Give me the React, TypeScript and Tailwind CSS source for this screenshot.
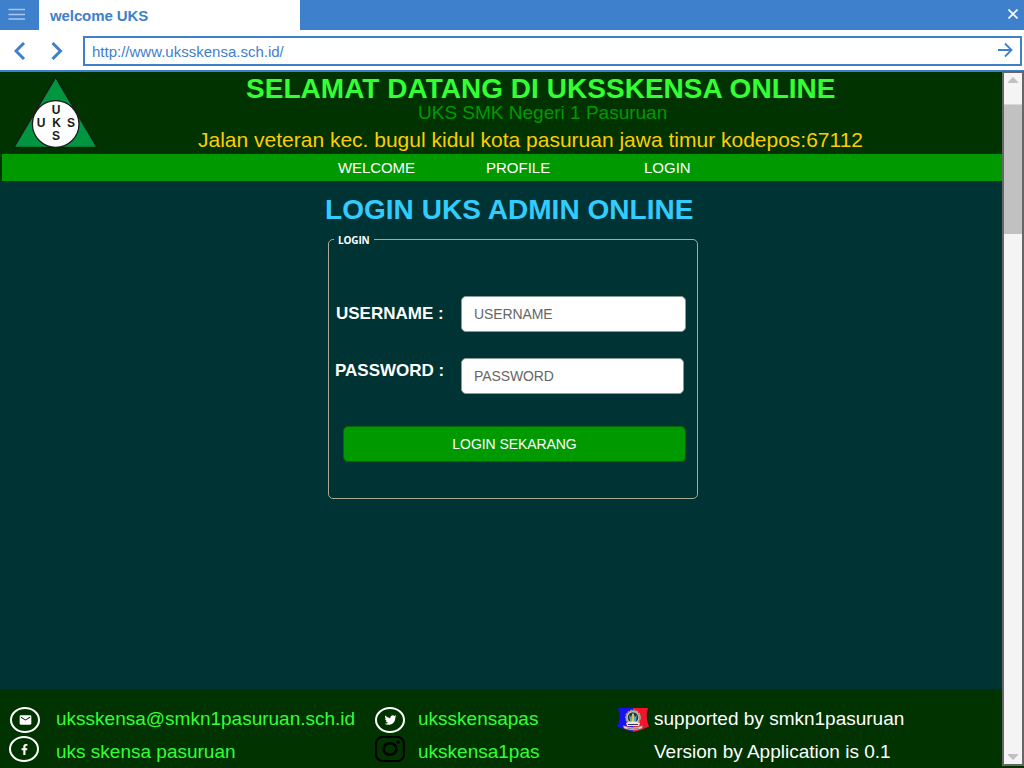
import React from "react";
import { MdEmail } from "react-icons/md";
import { FaFacebookF, FaTwitter } from "react-icons/fa";

function UksLogo() {
  return (
    <svg className="h-[74px] w-[88px]" viewBox="0 0 88 74">
      <path d="M43.700 2.500 L85 72.500 H2 Z" fill="#009640" stroke="#1b1b1b" strokeWidth="1.300" />
      <circle cx="43.700" cy="49" r="23.300" fill="#fff" stroke="#1b1b1b" strokeWidth="1.300" />
      <g fill="#1b1b1b" fontFamily="Liberation Sans, sans-serif" fontWeight="700" fontSize="12" textAnchor="middle">
        <text x="44" y="39">U</text>
        <text x="29" y="52">U</text>
        <text x="44.500" y="52">K</text>
        <text x="59" y="52">S</text>
        <text x="44" y="65">S</text>
      </g>
    </svg>
  );
}

function Ring({ children }: { children: React.ReactNode }) {
  return (
    <div className="flex h-[26px] w-[30px] items-center justify-center rounded-[50%] border-2 border-white text-white">
      {children}
    </div>
  );
}

function InstagramMark() {
  return (
    <svg className="h-[26px] w-[30px]" viewBox="0 0 30 26" fill="none" stroke="#000">
      <rect x="1" y="1" width="28" height="24" rx="6.500" strokeWidth="2.200" />
      <ellipse cx="15" cy="13" rx="6.500" ry="5.700" strokeWidth="2.600" />
      <ellipse cx="23" cy="6" rx="1.900" ry="1.700" fill="#000" stroke="none" />
    </svg>
  );
}

function SchoolCrest() {
  return (
    <svg className="h-[25px] w-[32px]" viewBox="0 0 32 25">
      <path d="M1 1 H16 V25 L9 23 L0 19.500 Q5 10 1 1Z" fill="#1711ef" />
      <path d="M16 1 H31 Q28 10 32 19.500 L24 23 L16 25Z" fill="#f2162d" />
      <circle cx="16" cy="10.500" r="7" fill="#d3c3a0" stroke="#a79a86" strokeWidth="2" strokeDasharray="2 1" />
      <circle cx="16" cy="10.500" r="5.200" fill="#172f52" />
      <path d="M12 8 L14 10 L16 5 L18 10 L20 8 L19 14 H13Z" fill="#5aa9b5" />
      <path d="M15 7H17V14H15Z" fill="#d8c34a" />
      <path d="M9 16 Q16 12 23 16 L22 19 H10Z" fill="#eee5dd" />
      <path d="M6 18.500 Q16 22 26 18.500 L25 21.500 Q16 25 7 21.500Z" fill="#e8d4d2" stroke="#8d4555" strokeWidth=".6" />
      <path d="M11 17.500 H21" stroke="#393346" strokeWidth="1" />
      <path d="M10 21 Q16 23 22 21" fill="none" stroke="#7d6670" strokeWidth=".8" />
    </svg>
  );
}

function Scrollbar() {
  return (
    <div className="-mt-px flex h-[695px] w-[22px] flex-col border-2 border-[#666] bg-[#f4f4f4]">
      <div className="flex h-[32px] shrink-0 justify-center border-b border-[#d8d8d8] pt-[4px]">
        <svg className="h-[6px] w-[12px]" viewBox="0 0 12 6"><path d="M6 0 L11 5 V6 H1 V5Z" fill="#c1c1c1" /></svg>
      </div>
      <div className="h-[129px] shrink-0 bg-[#c1c1c1]" />
      <div className="flex grow items-end justify-center pb-[4px]">
        <svg className="h-[6px] w-[12px]" viewBox="0 0 12 6"><path d="M1 0 H11 V1 L6 6 L1 1Z" fill="#c1c1c1" /></svg>
      </div>
    </div>
  );
}

export default function App() {
  return (
    <div className="flex h-[768px] w-[1024px] flex-col overflow-hidden bg-[#003300] font-['Liberation_Sans',Arial,sans-serif] whitespace-nowrap">
      <div className="flex h-[30px] shrink-0 bg-[#3f80cd]">
        <div className="w-[39px] pt-[8px] pl-[8px]">
          <svg className="h-[12px] w-[18px]" viewBox="0 0 18 12" stroke="#a8c7ea" strokeWidth="1.700"><path d="M.5 1.500H17M.5 6.500H17M.5 11H17" /></svg>
        </div>
        <div className="w-[261px] bg-white pl-[11px] text-[15px] leading-[31px] font-bold tracking-[-0.1px] text-[#3f80cd]">welcome UKS</div>
        <div className="flex grow justify-end pt-[9px] pr-[6px]">
          <svg className="h-[10px] w-[10px]" viewBox="0 0 10 10" stroke="#fff" strokeWidth="1.600"><path d="M.5 .5L9.500 9.500M9.500 .5L.5 9.500" /></svg>
        </div>
      </div>
      <div className="flex h-[42px] shrink-0 border-b-2 border-[#3f80cd] bg-white pt-[6px] pr-[2px]">
        <div className="flex w-[83px] gap-[25px] pt-[6px] pl-[14px]">
          <svg className="h-[18px] w-[12px]" viewBox="0 0 12 18" fill="none" stroke="#3f80cd" strokeWidth="3"><path d="M10 1L2 9L10 17" /></svg>
          <svg className="h-[18px] w-[12px]" viewBox="0 0 12 18" fill="none" stroke="#3f80cd" strokeWidth="3"><path d="M1.500 1L9.500 9L1.500 17" /></svg>
        </div>
        <div className="flex h-[30px] grow justify-between border-2 border-[#3f80cd] pr-[7px] pl-[7px] text-[15px] leading-[28px] text-[#3f80cd]">
          <span>http://www.uksskensa.sch.id/</span>
          <svg className="mt-[4px] h-[16px] w-[16px]" viewBox="0 0 16 16" fill="none" stroke="#3f80cd" strokeWidth="1.800"><path d="M1 8H14.500M8 1.500L14.500 8L8 14.500" /></svg>
        </div>
      </div>
      <div className="flex h-[696px]">
        <main className="flex w-[1002px] flex-col">
          <header className="flex h-[82px] shrink-0 bg-[#003300]">
            <div className="w-[198px] pt-[3px] pl-[12px]"><UksLogo /></div>
            <div className="flex flex-col">
              <h1 className="h-[30px] pl-[48px] text-[28px] leading-[33px] font-bold tracking-[0.03px] text-[#33ff33]">SELAMAT DATANG DI UKSSKENSA ONLINE</h1>
              <p className="h-[24px] pl-[220px] text-[19px] leading-[22px] text-[#009900]">UKS SMK Negeri 1 Pasuruan</p>
              <p className="h-[28px] text-[21px] leading-[28px] text-[#ffcc00]">Jalan veteran kec. bugul kidul kota pasuruan jawa timur kodepos:67112</p>
            </div>
          </header>
          <nav className="ml-[2px] flex h-[27px] shrink-0 bg-[#009900] pl-[336px] text-[15px] leading-[28px] text-white">
            <a className="w-[148px] tracking-[-0.1px]">WELCOME</a>
            <a className="w-[158px]">PROFILE</a>
            <a>LOGIN</a>
          </nav>
          <section className="h-[508px] shrink-0 bg-[#003333] pt-[12px]">
            <h2 className="h-[41px] pl-[325px] text-[28px] leading-[33px] font-bold tracking-[0.04px] text-[#33ccff]">LOGIN UKS ADMIN ONLINE</h2>
            <fieldset className="ml-[328px] h-[265px] w-[370px] rounded-[5px] border border-[#aaa998]">
              <legend className="ml-[5px] h-[11px] px-[4px] font-['Open_Sans',sans-serif] text-[10px] leading-[12px] font-bold tracking-[-0.15px] text-white">LOGIN</legend>
              <div className="mt-[51px] flex h-[62px]">
                <label className="w-[132px] pt-[8px] pl-[7px] text-[17px] leading-[20px] font-bold text-white">USERNAME :</label>
                <input className="h-[36px] w-[225px] rounded-[5px] border border-[#8b9b9b] bg-white px-[12px] text-[14px] tracking-[-0.1px] placeholder:text-[#666]" placeholder="USERNAME" />
              </div>
              <div className="flex h-[68px]">
                <label className="w-[132px] pt-[3px] pl-[6px] text-[17px] leading-[20px] font-bold text-white">PASSWORD :</label>
                <input className="h-[36px] w-[223px] rounded-[5px] border border-[#8b9b9b] bg-white px-[12px] text-[14px] tracking-[-0.1px] placeholder:text-[#666]" placeholder="PASSWORD" />
              </div>
              <button className="ml-[14px] block h-[36px] w-[343px] rounded-[5px] border border-[#066606] bg-[#009900] text-[14px] tracking-[-0.07px] text-white">LOGIN SEKARANG</button>
            </fieldset>
          </section>
          <footer className="flex h-[79px] shrink-0 bg-[#003300] text-[19px] text-[#33ff33]">
            <div className="w-[375px] pt-[18px] pl-[9px]">
              <div className="flex h-[29px]"><div className="w-[47px] pl-px"><Ring><MdEmail className="h-[14px] w-[15px]" /></Ring></div><span className="leading-[24px]">uksskensa@smkn1pasuruan.sch.id</span></div>
              <div className="flex h-[29px]"><div className="w-[47px]"><Ring><FaFacebookF className="h-[11px] w-[11px]" /></Ring></div><span className="pt-[4px] leading-[24px]">uks skensa pasuruan</span></div>
            </div>
            <div className="w-[242px] pt-[18px]">
              <div className="flex h-[29px]"><div className="w-[43px]"><Ring><FaTwitter className="h-[12px] w-[13px]" /></Ring></div><span className="leading-[24px]">uksskensapas</span></div>
              <div className="flex h-[29px]"><div className="w-[43px]"><InstagramMark /></div><span className="pt-[4px] leading-[24px]">ukskensa1pas</span></div>
            </div>
            <div className="pt-[18px] text-white">
              <div className="flex h-[33px]"><div className="w-[37px]"><SchoolCrest /></div><span className="leading-[24px]">supported by smkn1pasuruan</span></div>
              <div className="pl-[37px] leading-[24px]">Version by Application is 0.1</div>
            </div>
          </footer>
        </main>
        <Scrollbar />
      </div>
    </div>
  );
}
